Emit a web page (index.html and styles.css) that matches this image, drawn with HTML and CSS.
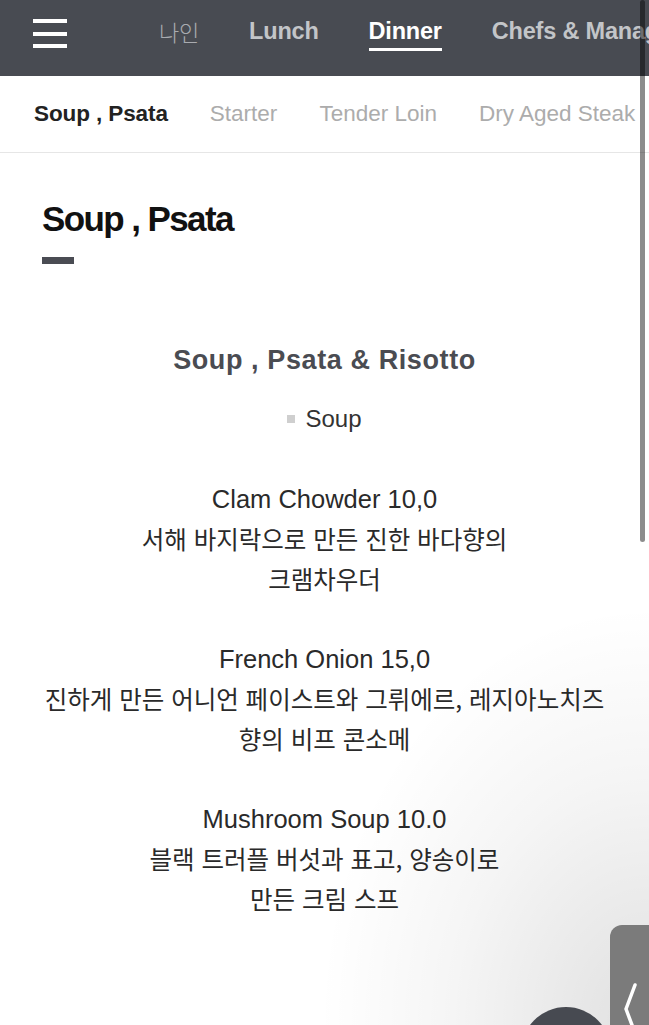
FILE: index.html
```html
<!DOCTYPE html>
<html lang="ko">
<head>
<meta charset="utf-8">
<title>Dinner - Soup, Psata</title>
<link rel="stylesheet" href="styles.css">
</head>
<body>
<header class="topbar">
  <button class="burger" aria-label="menu"><span></span><span></span><span></span></button>
  <nav class="mainnav">
    <a class="mn mn-ko">나인</a>
    <a class="mn">Lunch</a>
    <a class="mn active">Dinner</a>
    <a class="mn">Chefs &amp; Managers</a>
  </nav>
</header>
<nav class="subnav">
  <a class="sn active">Soup , Psata</a>
  <a class="sn">Starter</a>
  <a class="sn">Tender Loin</a>
  <a class="sn">Dry Aged Steak</a>
</nav>
<main class="content">
  <h1 class="page-title">Soup , Psata</h1>
  <div class="title-bar"></div>
  <section class="menu">
    <h2 class="menu-title">Soup , Psata &amp; Risotto</h2>
    <p class="menu-cat"><span class="bullet"></span>Soup</p>
    <div class="item">
      <p class="name">Clam Chowder 10,0</p>
      <p class="desc">서해 바지락으로 만든 진한 바다향의</p>
      <p class="desc">크램차우더</p>
    </div>
    <div class="item">
      <p class="name">French Onion 15,0</p>
      <p class="desc">진하게 만든 어니언 페이스트와 그뤼에르, 레지아노치즈</p>
      <p class="desc">향의 비프 콘소메</p>
    </div>
    <div class="item">
      <p class="name">Mushroom Soup 10.0</p>
      <p class="desc">블랙 트러플 버섯과 표고, 양송이로</p>
      <p class="desc">만든 크림 스프</p>
    </div>
  </section>
</main>
<div class="shade"></div>
<div class="scrollbar"></div>
<div class="side-tab">
  <svg width="16" height="50" viewBox="0 0 16 50"><polyline points="12,2 3,26 12,50" fill="none" stroke="#fff" stroke-width="3.5" stroke-linecap="round" stroke-linejoin="round"/></svg>
</div>
<div class="fab"></div>
</body>
</html>
```
FILE: styles.css
```css
* { box-sizing: border-box; }
html, body { margin: 0; padding: 0; }
body {
  width: 649px;
  height: 1025px;
  overflow: hidden;
  position: relative;
  background: #fff;
  font-family: "Liberation Sans", "Noto Sans CJK KR", Arial, sans-serif;
  color: #222;
}
a { text-decoration: none; }

.topbar {
  height: 76px;
  background: #484b52;
  display: flex;
  align-items: center;
  white-space: nowrap;
  overflow: hidden;
}
.burger {
  flex-shrink: 0;
  border: 0;
  background: none;
  padding: 0;
  margin-left: 33px;
  width: 34px;
  height: 29px;
  display: flex;
  flex-direction: column;
  justify-content: space-between;
  margin-top: -9px;
}
.burger span {
  display: block;
  height: 4px;
  background: #fff;
}
.mainnav {
  flex-shrink: 0;
  display: flex;
  gap: 50px;
  margin-left: 92px;
  align-items: center;
}
.mn {
  flex-shrink: 0;
  font-size: 23.5px;
  font-weight: bold;
  letter-spacing: -0.2px;
  color: #c3c5c8;
  position: relative;
  line-height: 30px;
  margin-top: -14px;
}
.mn-ko {
  font-family: "Noto Sans CJK KR", sans-serif;
  font-weight: 300;
  color: #a9abb0;
  font-size: 22px;
}
.mn.active { color: #fff; }
.mn.active::after {
  content: "";
  position: absolute;
  left: 0;
  right: 0;
  bottom: -5px;
  height: 3px;
  background: #fff;
}

.subnav {
  height: 77px;
  border-bottom: 1px solid #e6e6e6;
  display: flex;
  align-items: center;
  gap: 42px;
  padding-left: 34px;
  white-space: nowrap;
  overflow: hidden;
}
.sn {
  flex-shrink: 0;
  font-size: 22.5px;
  color: #acacac;
}
.sn.active {
  color: #222;
  font-weight: bold;
  letter-spacing: -0.1px;
}

.content { padding-top: 46px; }
.page-title {
  margin: 0 0 0 42px;
  font-size: 35px;
  line-height: 40px;
  font-weight: bold;
  letter-spacing: -1.6px;
  color: #111;
}
.title-bar {
  margin: 18px 0 0 42px;
  width: 32px;
  height: 7px;
  background: #4a4c53;
}
.menu {
  text-align: center;
  margin-top: 76px;
}
.menu p { margin: 0; }
.menu-title {
  margin: 0;
  font-size: 27px;
  line-height: 40px;
  font-weight: bold;
  letter-spacing: 0.6px;
  color: #4a4c52;
}
.menu-cat {
  margin-top: 19px !important;
  font-size: 24px;
  line-height: 40px;
  color: #333;
}
.bullet {
  display: inline-block;
  width: 8px;
  height: 8px;
  background: #cfcfcf;
  margin-right: 10px;
  vertical-align: middle;
  position: relative;
  top: -2px;
}
.item { margin-top: 40px; }
.name {
  font-size: 25.5px;
  line-height: 40px;
  color: #2a2a2a;
}
.desc {
  font-family: "Noto Sans CJK KR", "Liberation Sans", sans-serif;
  font-weight: 400;
  font-size: 24.5px;
  line-height: 40px;
  color: #2a2a2a;
}

.shade {
  position: absolute;
  right: 0;
  bottom: 0;
  width: 649px;
  height: 700px;
  background: radial-gradient(ellipse 330px 420px at 100% 100%, rgba(0,0,0,0.12), rgba(0,0,0,0.04) 60%, rgba(0,0,0,0) 100%);
  pointer-events: none;
}
.scrollbar {
  position: absolute;
  left: 640px;
  top: 0;
  width: 5px;
  height: 542px;
  border-radius: 3px;
  background: rgba(0,0,0,0.45);
}
.side-tab {
  position: absolute;
  left: 610px;
  top: 925px;
  width: 39px;
  height: 100px;
  background: #7b7b7b;
  border-top-left-radius: 12px;
  padding: 58px 0 0 13px;
}
.side-tab svg { display: block; }
.fab {
  position: absolute;
  left: 521px;
  top: 1007px;
  width: 90px;
  height: 90px;
  border-radius: 50%;
  background: #474a51;
}
```
